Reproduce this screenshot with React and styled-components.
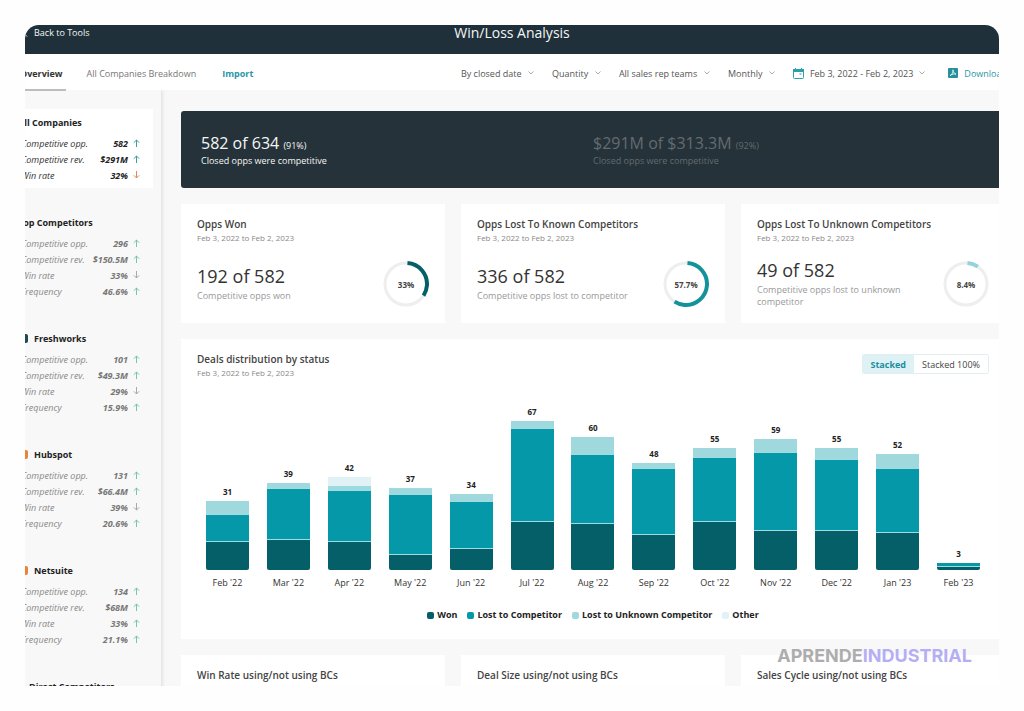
import React, { useState } from "react";
import styled, { createGlobalStyle } from "styled-components";

const months = [
  { label: "Feb '22", won: 13, lost: 12, unknown: 6, other: 0 },
  { label: "Mar '22", won: 14, lost: 23, unknown: 2, other: 0 },
  { label: "Apr '22", won: 13, lost: 23, unknown: 2, other: 4 },
  { label: "May '22", won: 7, lost: 27, unknown: 3, other: 0 },
  { label: "Jun '22", won: 10, lost: 21, unknown: 3, other: 0 },
  { label: "Jul '22", won: 22, lost: 42, unknown: 3, other: 0 },
  { label: "Aug '22", won: 21, lost: 31, unknown: 8, other: 0 },
  { label: "Sep '22", won: 16, lost: 30, unknown: 2, other: 0 },
  { label: "Oct '22", won: 22, lost: 29, unknown: 4, other: 0 },
  { label: "Nov '22", won: 18, lost: 35, unknown: 6, other: 0 },
  { label: "Dec '22", won: 18, lost: 32, unknown: 5, other: 0 },
  { label: "Jan '23", won: 17, lost: 29, unknown: 6, other: 0 },
  { label: "Feb '23", won: 2, lost: 1, unknown: 0, other: 0 },
];

const series = [
  { key: "other", label: "Other", color: "#e0f2f6" },
  { key: "unknown", label: "Lost to Unknown Competitor", color: "#a0d9dd" },
  { key: "lost", label: "Lost to Competitor", color: "#0498a8" },
  { key: "won", label: "Won", color: "#045f69" },
];

const groups = [
  {
    name: "All Companies",
    active: true,
    rows: [
      ["Competitive opp.", "582", "up"],
      ["Competitive rev.", "$291M", "up"],
      ["Win rate", "32%", "down"],
    ],
  },
  {
    name: "Top Competitors",
    rows: [
      ["Competitive opp.", "296", "up"],
      ["Competitive rev.", "$150.5M", "up"],
      ["Win rate", "33%", "down"],
      ["Frequency", "46.6%", "up"],
    ],
  },
  {
    name: "Freshworks",
    logo: "#1f4a4f",
    rows: [
      ["Competitive opp.", "101", "up"],
      ["Competitive rev.", "$49.3M", "up"],
      ["Win rate", "29%", "down"],
      ["Frequency", "15.9%", "up"],
    ],
  },
  {
    name: "Hubspot",
    logo: "#e8833a",
    rows: [
      ["Competitive opp.", "131", "up"],
      ["Competitive rev.", "$66.4M", "up"],
      ["Win rate", "39%", "down"],
      ["Frequency", "20.6%", "up"],
    ],
  },
  {
    name: "Netsuite",
    logo: "#e8833a",
    rows: [
      ["Competitive opp.", "134", "up"],
      ["Competitive rev.", "$68M", "up"],
      ["Win rate", "33%", "up"],
      ["Frequency", "21.1%", "up"],
    ],
  },
  { name: "Direct Competitors", indent: true, rows: [] },
];

const summary = [
  {
    title: "Opps Won",
    value: "192 of 582",
    note: "Competitive opps won",
    percent: 33,
    color: "#045f69",
  },
  {
    title: "Opps Lost To Known Competitors",
    value: "336 of 582",
    note: "Competitive opps lost to competitor",
    percent: 57.7,
    color: "#14929b",
  },
  {
    title: "Opps Lost To Unknown Competitors",
    value: "49 of 582",
    note: "Competitive opps lost to unknown competitor",
    percent: 8.4,
    color: "#94d3d9",
  },
];

const period = "Feb 3, 2022 to Feb 2, 2023";

function Chevron() {
  return (
    <svg width="6" height="4" viewBox="0 0 6 4" fill="none" stroke="#aaa" aria-hidden="true">
      <path d="M0.5 0.5 L3 3 L5.5 0.5" />
    </svg>
  );
}

function Arrow({ dir, color }) {
  return (
    <svg width="7" height="8" viewBox="0 0 7 8" fill="none" stroke={color} aria-hidden="true">
      {dir === "up" ? (
        <path d="M3.5 8 V1 M0.8 3.7 L3.5 1 L6.2 3.7" />
      ) : (
        <path d="M3.5 0 V7 M0.8 4.3 L3.5 7 L6.2 4.3" />
      )}
    </svg>
  );
}

function CalendarIcon() {
  return (
    <svg width="11" height="11" viewBox="0 0 11 11" fill="none" aria-hidden="true">
      <rect x="0.5" y="1.5" width="10" height="9" rx="1" stroke="#2b9fac" />
      <path d="M0 1 H11 V4 H0 Z" fill="#2b9fac" />
      <path d="M2.5 0 V2 M8.5 0 V2" stroke="#2b9fac" />
      <rect x="6.5" y="5" width="2" height="2" fill="#8fcdd3" />
    </svg>
  );
}

function PdfIcon() {
  return (
    <svg width="10" height="10" viewBox="0 0 10 10" fill="none" aria-hidden="true">
      <rect width="10" height="10" rx="1" fill="#26919d" />
      <path
        d="M5 1.8 C4.4 2.8 5.6 5 8 6.2 C6.6 5.6 4 6 2 7.6 C3.8 7 5.6 4 5 1.8 Z"
        stroke="#fff"
        strokeWidth="0.8"
      />
    </svg>
  );
}

function Ring({ percent, color }) {
  const length = 2 * Math.PI * 21;
  return (
    <RingBox>
      <svg width="46" height="46" viewBox="0 0 46 46" fill="none" aria-hidden="true">
        <circle cx="23" cy="23" r="21" stroke="#eeeeee" strokeWidth="3" />
        <circle
          cx="23"
          cy="23"
          r="21"
          stroke={color}
          strokeWidth="4"
          strokeDasharray={`${(length * percent) / 100} ${length}`}
          transform="rotate(-86 23 23)"
        />
      </svg>
      <RingLabel>{percent}%</RingLabel>
    </RingBox>
  );
}

function Filter({ label }) {
  return (
    <FilterBox>
      <FilterSelect aria-label={label}>
        <option>{label}</option>
      </FilterSelect>
      <Chevron />
    </FilterBox>
  );
}

export default function App() {
  const [mode, setMode] = useState("Stacked");
  const max = 67;

  return (
    <>
      <GlobalStyle />
      <Frame>
        <Canvas>
          <Header>
            <BackLink href="#tools">
              <svg width="6" height="9" viewBox="0 0 6 9" fill="none" stroke="#fff" aria-hidden="true">
                <path d="M5 0.5 L1 4.5 L5 8.5" />
              </svg>
              Back to Tools
            </BackLink>
            <PageTitle>Win/Loss Analysis</PageTitle>
          </Header>

          <Toolbar>
            <Tabs>
              <Tab href="#overview" $active>
                Overview
              </Tab>
              <Tab href="#breakdown">All Companies Breakdown</Tab>
              <ImportLink href="#import">Import</ImportLink>
            </Tabs>
            <Filters>
              <Filter label="By closed date" />
              <Filter label="Quantity" />
              <Filter label="All sales rep teams" />
              <Filter label="Monthly" />
              <DateButton type="button">
                <CalendarIcon />
                Feb 3, 2022 - Feb 2, 2023
                <Chevron />
              </DateButton>
              <DownloadButton type="button">
                <PdfIcon />
                Download
              </DownloadButton>
            </Filters>
          </Toolbar>

          <Body>
            <Sidebar>
              {groups.map((group) => (
                <Group key={group.name} $active={group.active}>
                  <GroupTitle $indent={group.indent}>
                    {group.logo && <CompanyLogo $color={group.logo} />}
                    {group.name}
                  </GroupTitle>
                  {group.rows.map(([label, value, dir]) => (
                    <Metric key={label} $active={group.active}>
                      <dt>{label}</dt>
                      <dd>{value}</dd>
                      <Arrow
                        dir={dir}
                        color={dir === "up" ? (group.active ? "#3f9d97" : "#79c5ab") : group.active ? "#dd8a55" : "#a5aaa8"}
                      />
                    </Metric>
                  ))}
                </Group>
              ))}
            </Sidebar>

            <Main>
              <Banner>
                <BannerItem>
                  <BannerValue>
                    582 of 634 <small>(91%)</small>
                  </BannerValue>
                  <BannerNote>Closed opps were competitive</BannerNote>
                </BannerItem>
                <BannerItem $muted>
                  <BannerValue>
                    $291M of $313.3M <small>(92%)</small>
                  </BannerValue>
                  <BannerNote>Closed opps were competitive</BannerNote>
                </BannerItem>
              </Banner>

              <CardGrid>
                {summary.map((item) => (
                  <Card key={item.title}>
                    <CardTitle>{item.title}</CardTitle>
                    <CardDate>{period}</CardDate>
                    <CardBody>
                      <Figure>
                        <FigureValue>{item.value}</FigureValue>
                        <FigureNote>{item.note}</FigureNote>
                      </Figure>
                      <Ring percent={item.percent} color={item.color} />
                    </CardBody>
                  </Card>
                ))}
              </CardGrid>

              <Card>
                <ChartHead>
                  <div>
                    <CardTitle>Deals distribution by status</CardTitle>
                    <CardDate>{period}</CardDate>
                  </div>
                  <Toggle>
                    {["Stacked", "Stacked 100%"].map((name) => (
                      <ToggleButton
                        key={name}
                        type="button"
                        $active={mode === name}
                        onClick={() => setMode(name)}
                      >
                        {name}
                      </ToggleButton>
                    ))}
                  </Toggle>
                </ChartHead>
                <Chart>
                  {months.map((month) => {
                    const total = month.won + month.lost + month.unknown + month.other;
                    const scale = mode === "Stacked" ? max : total;
                    return (
                      <Column key={month.label}>
                        <Plot>
                          <Bar style={{ height: `${(total / scale) * 100}%` }}>
                            <BarTotal>{total}</BarTotal>
                            {series
                              .filter((s) => month[s.key] > 0)
                              .map((s) => (
                                <Segment
                                  key={s.key}
                                  $color={s.color}
                                  style={{ height: `${(month[s.key] / total) * 100}%` }}
                                />
                              ))}
                          </Bar>
                        </Plot>
                        <MonthLabel>{month.label}</MonthLabel>
                      </Column>
                    );
                  })}
                </Chart>
                <Legend>
                  {[...series].reverse().map((s) => (
                    <LegendItem key={s.key} $color={s.color}>
                      {s.label}
                    </LegendItem>
                  ))}
                </Legend>
              </Card>

              <CardGrid>
                <Card>
                  <CardTitle>Win Rate using/not using BCs</CardTitle>
                </Card>
                <Card>
                  <CardTitle>Deal Size using/not using BCs</CardTitle>
                </Card>
                <Card>
                  <CardTitle>Sales Cycle using/not using BCs</CardTitle>
                </Card>
              </CardGrid>
            </Main>
          </Body>
        </Canvas>
        <Watermark>
          APRENDE<span>INDUSTRIAL</span>
        </Watermark>
      </Frame>
    </>
  );
}

/* ---------- STYLES ---------- */
const GlobalStyle = createGlobalStyle`
  * {
    box-sizing: border-box;
  }
  body {
    margin: 0;
    padding: 25px;
    background: #fefefe;
    color: #333;
    font-family: "Open Sans", "Noto Sans", sans-serif;
    font-size: 9px;
  }
  h1, h2, h3, p, dl, dd {
    margin: 0;
  }
  button, select {
    font: inherit;
    color: inherit;
    background: none;
    border: 0;
    margin: 0;
    padding: 0;
    cursor: pointer;
  }
  a {
    color: inherit;
    text-decoration: none;
  }
  svg {
    flex: none;
  }
`;

const Frame = styled.div`
  position: relative;
  height: calc(100vh - 50px);
  overflow: hidden;
  border-radius: 14px 14px 0 0;
  background: #f8f8f8;
`;

const Canvas = styled.div`
  margin: -15px -15px 0;
`;

/* HEADER */
const Header = styled.header`
  display: grid;
  grid-template-columns: 1fr auto 1fr;
  align-items: center;
  height: 44px;
  padding: 0 12px;
  background: #1f303a;
  color: #f4f6f6;
`;

const BackLink = styled.a`
  display: flex;
  align-items: center;
  gap: 6px;
`;

const PageTitle = styled.h1`
  font-size: 14px;
  font-weight: 500;
`;

const Toolbar = styled.nav`
  position: relative;
  z-index: 1;
  display: flex;
  justify-content: space-between;
  height: 36px;
  padding: 0 7px 0 6px;
  background: #fff;
`;

const Tabs = styled.div`
  display: flex;
`;

const Tab = styled.a`
  display: flex;
  align-items: center;
  height: 37px;
  padding: 4px 3px 0 4px;
  margin-right: 17px;
  border-bottom: 2px solid ${(props) => (props.$active ? "#bdbdbd" : "transparent")};
  color: ${(props) => (props.$active ? "#333" : "#777")};
  font-weight: ${(props) => (props.$active ? 700 : 400)};
  white-space: nowrap;
`;

const ImportLink = styled.a`
  display: flex;
  align-items: center;
  padding: 2px 6px 0;
  color: #2796a8;
  font-weight: 700;
`;

const Filters = styled.div`
  display: flex;
  align-items: center;
  gap: 18px;
  padding-top: 2px;
  color: #555;
  white-space: nowrap;
`;

const FilterBox = styled.label`
  display: flex;
  align-items: center;
  gap: 6px;
`;

const FilterSelect = styled.select`
  appearance: none;
  outline: none;
`;

const DateButton = styled.button`
  display: flex;
  align-items: center;
  gap: 6px;
`;

const DownloadButton = styled(DateButton)`
  margin-left: 5px;
  color: #2796a8;
`;

/* SIDEBAR */
const Body = styled.div`
  display: flex;
`;

const Sidebar = styled.aside`
  display: flex;
  flex-direction: column;
  gap: 21px;
  flex: none;
  width: 151px;
  padding: 19px 8px 0 0;
  background: #f8f8f8;
  box-shadow: 1px 0 4px rgba(0, 0, 0, 0.12);
`;

const Group = styled.dl`
  padding: 5px 13px 5px 8px;
  background: ${(props) => (props.$active ? "#fff" : "transparent")};
`;

const GroupTitle = styled.h2`
  display: flex;
  align-items: center;
  gap: 6px;
  height: 16px;
  margin-bottom: 5px;
  padding-left: ${(props) => (props.$indent ? 11 : 0)}px;
  color: #222;
  font-size: 9px;
  font-weight: 700;
`;

const CompanyLogo = styled.span`
  width: 10px;
  height: 9px;
  border-radius: 2px;
  background: ${(props) => props.$color};
`;

const Metric = styled.div`
  display: flex;
  align-items: center;
  height: 16px;
  color: ${(props) => (props.$active ? "#333" : "#888")};
  font-style: italic;

  dt {
    flex: 1;
    padding-left: 3px;
  }

  dd {
    margin-right: 5px;
    color: ${(props) => (props.$active ? "#222" : "#777")};
    font-weight: 700;
  }
`;

/* CONTENT */
const Main = styled.main`
  display: flex;
  flex-direction: column;
  gap: 16px;
  flex: 1;
  min-width: 0;
  padding: 21px 9px 0 20px;
`;

const Banner = styled.section`
  display: grid;
  grid-template-columns: 1fr 1fr;
  padding: 21px 20px 20px;
  border-radius: 3px;
  background: #263239;
`;

const BannerItem = styled.div`
  color: ${(props) => (props.$muted ? "#626b6f" : "#f4f6f6")};
`;

const BannerValue = styled.p`
  height: 22px;
  font-size: 16px;
  line-height: 22px;

  small {
    font-size: 9px;
  }
`;

const BannerNote = styled.p`
  font-size: 9px;
  line-height: 14px;
`;

const CardGrid = styled.div`
  display: grid;
  grid-template-columns: repeat(3, 1fr);
  gap: 16px;
`;

const Card = styled.section`
  padding: 12px 16px 16px;
  background: #fff;
`;

const CardTitle = styled.h3`
  color: #444;
  font-size: 10px;
  font-weight: 600;
  line-height: 16px;
`;

const CardDate = styled.p`
  color: #888;
  font-size: 8px;
  line-height: 12px;
`;

const CardBody = styled.div`
  display: flex;
  align-items: center;
  justify-content: space-between;
  height: 46px;
  margin-top: 17px;
`;

const Figure = styled.div`
  max-width: 170px;
  padding-bottom: 4px;
`;

const FigureValue = styled.p`
  color: #333;
  font-size: 18px;
  line-height: 28px;
`;

const FigureNote = styled.p`
  color: #999;
  font-size: 9px;
  line-height: 12px;
`;

const RingBox = styled.div`
  display: grid;
  place-items: center;

  > * {
    grid-area: 1 / 1;
  }
`;

const RingLabel = styled.span`
  color: #444;
  font-size: 8px;
  font-weight: 700;
`;

/* CHART */
const ChartHead = styled.div`
  display: flex;
  align-items: flex-start;
  justify-content: space-between;
`;

const Toggle = styled.div`
  display: flex;
  margin-top: 3px;
  border: 1px solid #e3eef0;
  border-radius: 2px;
`;

const ToggleButton = styled.button`
  height: 18px;
  padding: 0 8px;
  background: ${(props) => (props.$active ? "#def2f6" : "#fff")};
  color: ${(props) => (props.$active ? "#1d8d9c" : "#444")};
  font-weight: ${(props) => (props.$active ? 700 : 400)};
`;

const Chart = styled.div`
  display: grid;
  grid-template-columns: repeat(13, 1fr);
  padding-top: 42px;
`;

const Column = styled.div`
  text-align: center;
`;

const Plot = styled.div`
  display: flex;
  align-items: flex-end;
  justify-content: center;
  height: 149px;
`;

const Bar = styled.div`
  position: relative;
  width: 43px;
  border-radius: 0 0 2px 2px;
`;

const BarTotal = styled.span`
  position: absolute;
  bottom: 100%;
  left: 0;
  right: 0;
  margin-bottom: 3px;
  color: #222;
  font-size: 8px;
  font-weight: 700;
  line-height: 12px;
`;

const Segment = styled.div`
  background: ${(props) => props.$color};

  & + & {
    border-top: 1px solid #9fdce2;
  }

  &:last-child {
    border-radius: 0 0 2px 2px;
  }
`;

const MonthLabel = styled.p`
  padding-top: 5px;
  line-height: 16px;
`;

const Legend = styled.div`
  display: flex;
  justify-content: center;
  gap: 10px;
  padding-top: 16px;
`;

const LegendItem = styled.span`
  display: flex;
  align-items: center;
  gap: 3px;
  color: #222;
  font-size: 9px;
  font-weight: 700;
  line-height: 16px;

  &::before {
    content: "";
    width: 7px;
    height: 7px;
    border-radius: 2px;
    background: ${(props) => props.$color};
  }
`;

const Watermark = styled.div`
  position: absolute;
  right: 27px;
  bottom: 18px;
  color: #adadad;
  font-family: Inter, sans-serif;
  font-size: 18px;
  font-weight: 700;
  line-height: 24px;

  span {
    color: #b5aef5;
  }
`;
